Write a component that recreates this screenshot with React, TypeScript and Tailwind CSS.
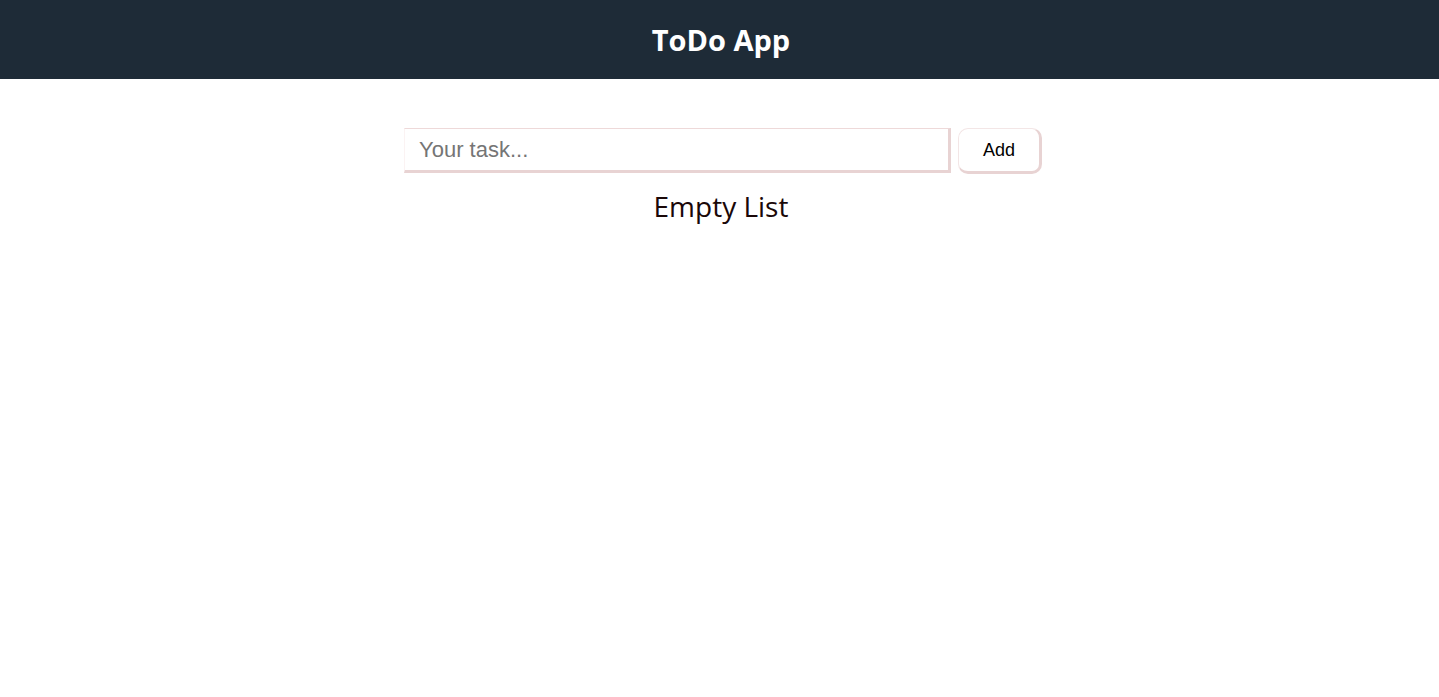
import React from "react";

export default function App() {
  return (
    <div className="min-h-screen bg-white">
      <header className="h-[79px] bg-[#1e2b37] flex items-center justify-center">
        <h1 className="text-white text-[29px] font-bold ml-[3px]" style={{ fontFamily: '"Open Sans", sans-serif' }}>
          ToDo App
        </h1>
      </header>
      <main className="flex flex-col items-center pt-[49px]">
        <div className="flex items-start gap-[7px] ml-[7px]">
          <input
            placeholder="Your task..."
            className="w-[547px] h-[45px] pl-[14px] border-t border-t-[#eed9d9] border-l border-l-[#fbf3f3] border-r-[3px] border-r-[#e8d3d3] border-b-[3px] border-b-[#e8d3d3] text-[22px] text-black placeholder:text-[#757575] outline-none bg-white"
            style={{ fontFamily: '"Liberation Sans", Arial, sans-serif' }}
          />
          <button
            className="w-[84px] h-[46px] rounded-[10px] border-t border-l border-t-[#f3e6e6] border-l-[#f3e6e6] border-r-[3px] border-b-[3px] border-r-[#e8d3d3] border-b-[#e8d3d3] bg-white text-[18px] text-black"
            style={{ fontFamily: '"Liberation Sans", Arial, sans-serif' }}
          >
            Add
          </button>
        </div>
        <p className="mt-[11px] ml-[3px] text-[28px] text-[#1a0808]" style={{ fontFamily: '"Open Sans", sans-serif' }}>
          Empty List
        </p>
      </main>
    </div>
  );
}
